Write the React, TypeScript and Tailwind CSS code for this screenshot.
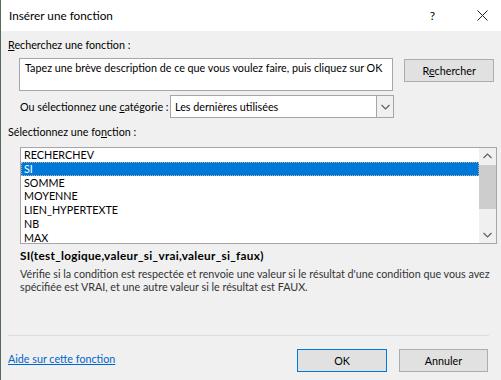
const FUNCS = ['RECHERCHEV', 'SI', 'SOMME', 'MOYENNE', 'LIEN_HYPERTEXTE', 'NB', 'MAX']

function Chevron({ dir }: { dir: 'up' | 'down' }) {
  return (
    <svg width="9" height="6" viewBox="0 0 9 6" className="block">
      <path
        d={dir === 'up' ? 'M0.5 5 L4.5 1 L8.5 5' : 'M0.5 1 L4.5 5 L8.5 1'}
        fill="none"
        stroke="#606060"
        strokeWidth="1.2"
      />
    </svg>
  )
}

export default function App() {
  const selected = 1

  return (
    <div
      className="w-[501px] h-[380px] bg-[#f0f0f0] flex flex-col overflow-hidden text-[10.75px] text-black whitespace-nowrap border-l border-[#5a6a5a]"
      style={{ fontFamily: 'Lato, "Noto Sans", sans-serif' }}
    >
      {/* title bar */}
      <div className="h-[31px] bg-white flex items-center shrink-0">
        <span className="pl-[8px] text-[11.75px]">Insérer une fonction</span>
        <span className="ml-auto mr-[42px] text-[12px]">?</span>
        <svg width="11" height="11" viewBox="0 0 11 11" className="mr-[13px]">
          <path d="M0.5 0.5 L10.5 10.5 M10.5 0.5 L0.5 10.5" stroke="#222" strokeWidth="1" />
        </svg>
      </div>

      <div className="flex flex-col flex-1 px-[7px]">
        <div className="mt-[6px] leading-[16px]">
          <u>R</u>echerchez une fonction :
        </div>

        <div className="flex items-start mt-[5px]">
          <div className="ml-[11px] w-[376px] h-[33px] bg-white border border-[#a6a6a6] px-[5px] pt-[1px] leading-[16px]">
            Tapez une brève description de ce que vous voulez faire, puis cliquez sur OK
          </div>
          <button className="ml-[11px] mt-[1px] w-[90px] h-[23px] bg-[#e1e1e1] border border-[#adadad] leading-[16px]">
            R<u>e</u>chercher
          </button>
        </div>

        <div className="flex items-center mt-[4px]">
          <span className="ml-[12px] leading-[16px]">
            Ou sélectionnez une <u>c</u>atégorie :
          </span>
          <div className="ml-auto mr-[100px] w-[224px] h-[23px] bg-white border border-[#a6a6a6] flex items-center">
            <span className="pl-[4px] flex-1 leading-[16px]">Les dernières utilisées</span>
            <div className="w-[17px] h-full bg-[#f0f0f0] border-l border-[#a6a6a6] flex items-center justify-center">
              <Chevron dir="down" />
            </div>
          </div>
        </div>

        <div className="mt-[6px] leading-[16px]">
          Sélectionnez une fo<u>n</u>ction :
        </div>

        <div className="ml-[12px] mt-[7px] w-[477px] h-[97px] bg-white border border-[#a6a6a6] flex">
          <div className="flex-1 flex flex-col">
            {FUNCS.map((f, i) => (
              <div
                key={f}
                className={
                  i === selected
                    ? 'h-[13.75px] leading-[13.75px] pl-[3px] bg-[#0078d7] text-white outline outline-1 outline-dotted outline-[#b0b0b0] -outline-offset-1'
                    : 'h-[13.75px] leading-[13.75px] pl-[3px]'
                }
              >
                {f}
              </div>
            ))}
          </div>
          <div className="w-[17px] h-full bg-[#f0f0f0] flex flex-col items-center">
            <div className="h-[16px] flex items-center justify-center">
              <Chevron dir="up" />
            </div>
            <div className="w-full h-[44px] mt-[1px] bg-[#cdcdcd]" />
            <div className="flex-1" />
            <div className="h-[16px] flex items-center justify-center">
              <Chevron dir="down" />
            </div>
          </div>
        </div>

        <div className="ml-[12px] mt-[4px] font-bold text-[11.75px] tracking-[0.3px] leading-[16px]">
          SI(test_logique,valeur_si_vrai,valeur_si_faux)
        </div>
        <div className="ml-[12px] mt-[3px] leading-[13px] text-[#333]">
          Vérifie si la condition est respectée et renvoie une valeur si le résultat d'une condition que vous avez
          <br />
          spécifiée est VRAI, et une autre valeur si le résultat est FAUX.
        </div>

        <div className="mt-auto h-px bg-[#dcdcdc] mr-[5px]" />

        <div className="flex items-center mt-[13px] mb-[8px]">
          <span className="text-[#0066cc] underline leading-[16px] -mt-[4px]">Aide sur cette fonction</span>
          <button className="ml-auto w-[90px] h-[23px] bg-[#e1e1e1] border border-[#0078d7] leading-[16px]">
            OK
          </button>
          <button className="ml-[12px] mr-[6px] w-[89px] h-[23px] bg-[#e1e1e1] border border-[#adadad] leading-[16px]">
            Annuler
          </button>
        </div>
      </div>
    </div>
  )
}
